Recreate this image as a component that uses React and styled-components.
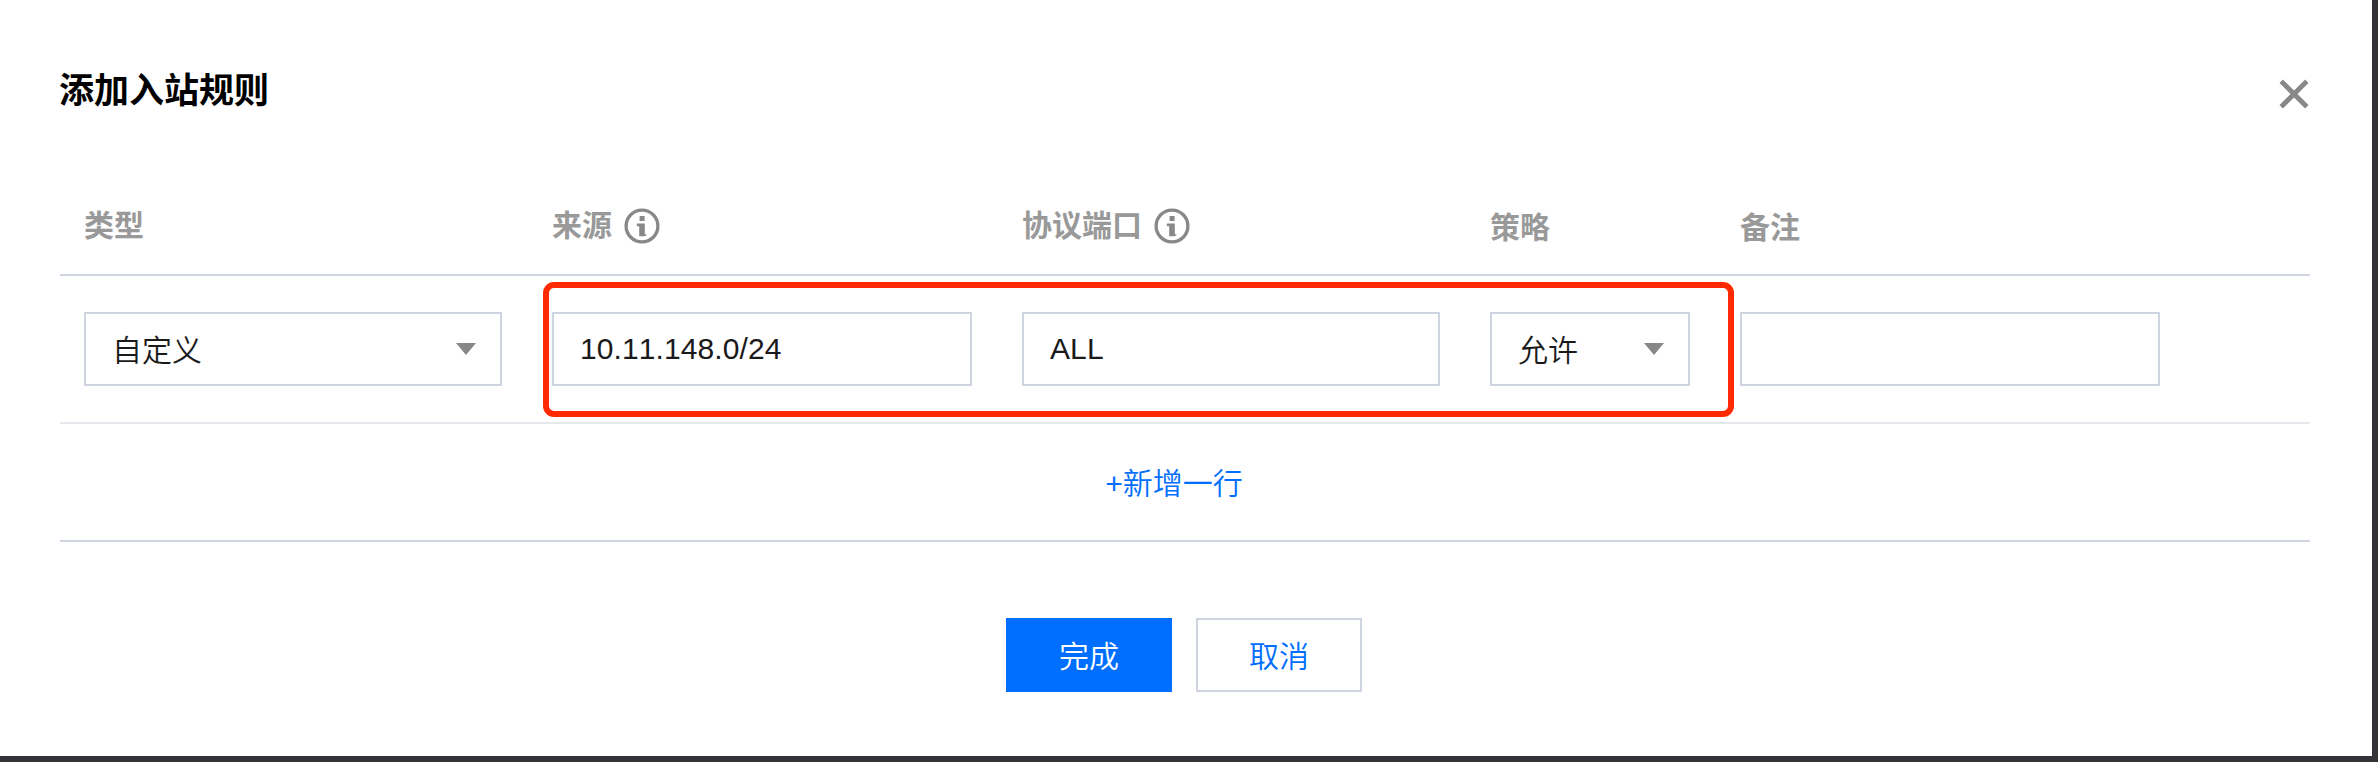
import React from 'react';
import styled, { createGlobalStyle } from 'styled-components';

const Global = createGlobalStyle`
  * { box-sizing: border-box; }
  body {
    margin: 0;
    background: #333337;
    font-family: "Liberation Sans", "Noto Sans CJK SC", sans-serif;
    font-size: 30px;
    font-weight: 350;
    font-kerning: none;
    color: #1a1a1a;
    overflow: hidden;
  }
  button, input { font: inherit; font-kerning: none; color: inherit; margin: 0; border-radius: 0; }
`;

const Backdrop = styled.div`
  height: 762px;
  padding: 0 6px 6px 0;
  background: #333337;
`;

const Dialog = styled.section`
  height: 100%;
  padding: 60px 62px 0 60px;
  background: #fff;
  display: flex;
  flex-direction: column;
`;

const DialogHeader = styled.header`
  display: flex;
  justify-content: space-between;
  height: 116px;
`;

const Title = styled.h1`
  margin: 1px 0 0 -1px;
  font-size: 35px;
  line-height: 60px;
  height: 60px;
  font-weight: 700;
  color: #000;
`;

const CloseButton = styled.button`
  width: 32px;
  height: 32px;
  margin-top: 18px;
  padding: 0;
  border: 0;
  background: none;
  display: flex;
`;

const Table = styled.div`
  height: 366px;
  border-bottom: 2px solid #cfd5e0;
`;

const Row = styled.div`
  position: relative;
  display: grid;
  grid-template-columns: 468px 470px 468px 250px 1fr;
  align-items: center;
`;

const HeadRow = styled(Row)`
  height: 100px;
  border-bottom: 2px solid #cfd5e0;
`;

const RuleRow = styled(Row)`
  height: 148px;
  border-bottom: 2px solid #e5e8ed;
`;

const HeadCell = styled.div`
  display: flex;
  align-items: center;
  gap: 12px;
  height: 44px;
  padding-left: 24px;
  margin-top: ${(p) => (p.$low ? '6px' : '2px')};
  font-weight: 700;
  line-height: 44px;
  color: #999;
`;

const Cell = styled.div`
  padding-left: 24px;
`;

const TextInput = styled.input`
  display: block;
  width: ${(p) => p.$width}px;
  height: 74px;
  padding: 0 26px;
  border: 2px solid #cfd5e0;
  background: #fff;
  letter-spacing: 0.1px;
  outline: none;
`;

const SelectBox = styled.button`
  display: flex;
  align-items: center;
  justify-content: space-between;
  width: ${(p) => p.$width}px;
  height: 74px;
  padding: 0 24px 0 26px;
  border: 2px solid #cfd5e0;
  background: #fff;
`;

const SelectText = styled.span`
  line-height: 44px;
  padding-top: 4px;
`;

const Highlight = styled.div`
  position: absolute;
  left: 483px;
  top: 6px;
  width: 1191px;
  height: 135px;
  border: 6px solid #ff2a00;
  border-radius: 11px;
  pointer-events: none;
`;

const AddRow = styled.div`
  display: flex;
  align-items: center;
  justify-content: center;
  height: 116px;
  padding: 3px 22px 0 0;
`;

const AddLink = styled.a`
  color: #006eff;
  line-height: 44px;
`;

const Actions = styled.footer`
  display: flex;
  justify-content: center;
  gap: 24px;
  margin-top: 76px;
  padding-right: 2px;
`;

const ActionButton = styled.button`
  width: 166px;
  height: 74px;
  padding: 4px 0 0;
  line-height: 44px;
  border: 2px solid ${(p) => (p.$primary ? '#006eff' : '#cfd5e0')};
  background: ${(p) => (p.$primary ? '#006eff' : '#fff')};
  color: ${(p) => (p.$primary ? '#fff' : '#006eff')};
`;

const InfoIcon = () => (
  <svg width="36" height="36" viewBox="-18 -18 36 36">
    <circle r="15.9" fill="none" stroke="#888" strokeWidth="3.3" />
    <path d="M-2.4-10h5v5h-5zM-5.2-2.4H2.8V8.4L4.4 8V9Q3.6 10.2 1.8 10.2H-2.8V.2H-5.2z" fill="#888" />
  </svg>
);

const CloseIcon = () => (
  <svg width="32" height="32" viewBox="-16 -16 32 32">
    <path d="M-12.8-12.8 12.8 12.8M12.8-12.8-12.8 12.8" stroke="#888" strokeWidth="4.8" />
  </svg>
);

const Caret = () => (
  <svg width="20" height="12" viewBox="0 0 20 12">
    <path d="M0 0H20L10 12z" fill="#888" />
  </svg>
);

const columns = [
  { label: '类型' },
  { label: '来源', info: true },
  { label: '协议端口', info: true },
  { label: '策略', low: true },
  { label: '备注', low: true },
];

export default function App() {
  return (
    <>
      <Global />
      <Backdrop>
        <Dialog>
          <DialogHeader>
            <Title>添加入站规则</Title>
            <CloseButton aria-label="关闭">
              <CloseIcon />
            </CloseButton>
          </DialogHeader>
          <Table>
            <HeadRow>
              {columns.map((c) => (
                <HeadCell key={c.label} $low={c.low}>
                  <span>{c.label}</span>
                  {c.info && <InfoIcon />}
                </HeadCell>
              ))}
            </HeadRow>
            <RuleRow>
              <Cell>
                <SelectBox $width={418}>
                  <SelectText>自定义</SelectText>
                  <Caret />
                </SelectBox>
              </Cell>
              <Cell>
                <TextInput $width={420} defaultValue="10.11.148.0/24" />
              </Cell>
              <Cell>
                <TextInput $width={418} defaultValue="ALL" />
              </Cell>
              <Cell>
                <SelectBox $width={200}>
                  <SelectText>允许</SelectText>
                  <Caret />
                </SelectBox>
              </Cell>
              <Cell>
                <TextInput $width={420} />
              </Cell>
              <Highlight />
            </RuleRow>
            <AddRow>
              <AddLink>+新增一行</AddLink>
            </AddRow>
          </Table>
          <Actions>
            <ActionButton $primary>完成</ActionButton>
            <ActionButton>取消</ActionButton>
          </Actions>
        </Dialog>
      </Backdrop>
    </>
  );
}
